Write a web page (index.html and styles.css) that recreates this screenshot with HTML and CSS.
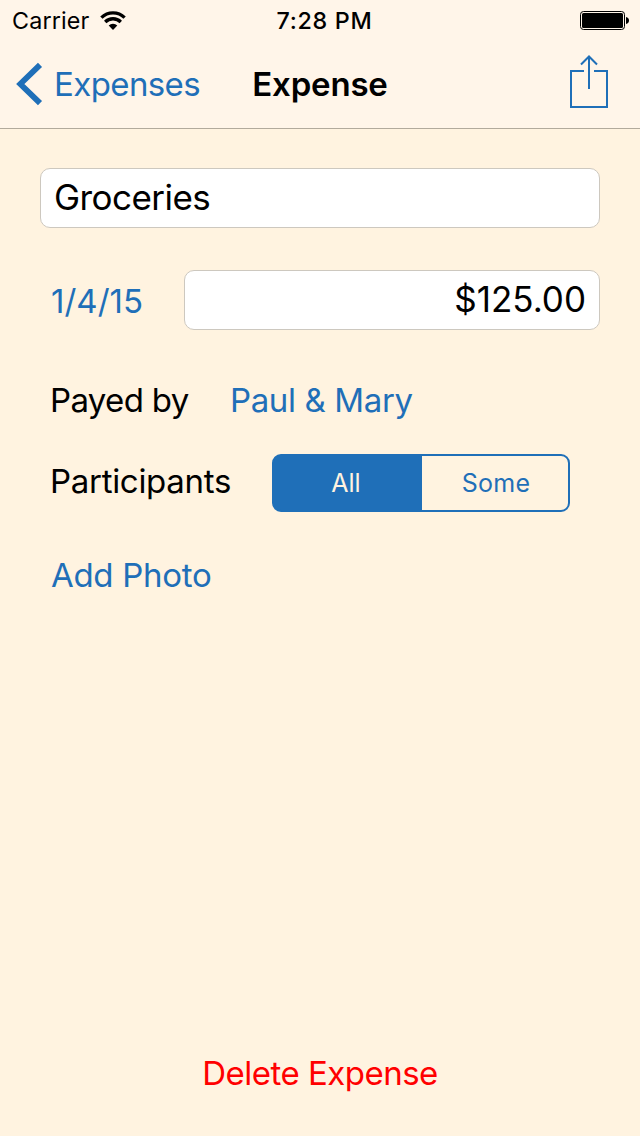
FILE: index.html
```html
<!DOCTYPE html>
<html lang="en">
<head>
<meta charset="utf-8">
<title>Expense</title>
<link rel="stylesheet" href="styles.css">
</head>
<body>
<div class="screen">
  <header class="top">
    <div class="status">
      <div class="carrier"><span class="carrier-name">Carrier</span>
        <svg class="wifi" width="26" height="20" viewBox="0 0 26 20" fill="none" stroke="#000">
          <path d="M1.4 6.7a16.3 16.3 0 0 1 23.2 0" stroke-width="3.300"/>
          <path d="M5.2 11a11 11 0 0 1 15.600 0" stroke-width="3.300"/>
          <path d="M13 19L8.700 14.600a6 6 0 0 1 8.600 0z" fill="#000" stroke="none"/>
        </svg>
      </div>
      <div class="time">7:28 PM</div>
      <svg class="battery" width="50" height="20" viewBox="0 0 50 20">
        <rect x=".5" y=".5" width="44" height="18" rx="3" fill="none" stroke="#000"/>
        <rect x="2" y="2" width="41" height="15" rx="1.500"/>
        <path d="M46 6c4 .5 4 6.500 0 7z"/>
      </svg>
    </div>
    <nav class="nav">
      <a class="back"><svg class="chevron" width="27" height="44" viewBox="0 0 27 44"><path d="M24 2.800L4.300 22 24 41.200" fill="none" stroke="#1f6fb8" stroke-width="5.800"/></svg><span class="back-label">Expenses</span></a>
      <h1 class="title">Expense</h1>
      <svg class="share" width="38" height="54" viewBox="0 0 38 54" fill="none" stroke="#1f6fb8" stroke-width="2"><path d="M14 17H1v36h36V17H24M19 35V3M11 10.500l8-8 8 8"/></svg>
    </nav>
  </header>
  <main class="form">
    <div class="field name">Groceries</div>
    <div class="row amount-row"><a class="link date">1/4/15</a><div class="field amount">$125.00</div></div>
    <div class="row payer-row"><span class="label payed">Payed by</span><a class="link payer">Paul &amp; Mary</a></div>
    <div class="row people-row"><span class="label people">Participants</span>
      <div class="segments"><div class="segment selected">All</div><div class="segment some">Some</div></div>
    </div>
    <a class="link photo">Add Photo</a>
  </main>
  <footer class="footer"><a class="delete">Delete Expense</a></footer>
</div>
</body>
</html>
```
FILE: styles.css
```css
* { box-sizing: border-box; }
body { margin: 0; font-family: Inter, "Liberation Sans", sans-serif; font-size: 33px; line-height: 40px; color: #000; }
.screen { width: 640px; height: 1136px; display: flex; flex-direction: column; background: #fff3e0; white-space: nowrap; }
.top { height: 129px; background: #fff5e9; border-bottom: 1px solid #b2aa9c; }
.status { height: 42px; display: grid; grid-template-columns: 1fr auto 1fr; align-items: center; padding: 0 10px 0 12px; font-size: 23.3px; }
.carrier { display: flex; align-items: center; gap: 10.5px; letter-spacing: .15px; }
.wifi { margin-bottom: 1px; }
.time { font-weight: 500; letter-spacing: .7px; padding-left: 7px; }
.battery { justify-self: end; }
.nav { height: 84px; display: grid; grid-template-columns: 1fr auto 1fr; align-items: center; padding: 0 32px 0 16px; }
.back { display: flex; align-items: center; gap: 11px; color: #1f6fb8; letter-spacing: -.6px; }
.title { margin: 0; padding-left: 16px; font-size: 33px; font-weight: 600; letter-spacing: -.2px; }
.share { justify-self: end; margin-bottom: 6px; }
.form { flex: 1; padding: 39px 40px 0; }
.field { height: 60px; border: 1px solid #cdc8bf; border-radius: 10px; background: #fff; font-size: 35px; line-height: 57px; padding: 0 13px; }
.name { letter-spacing: -.55px; }
.row { display: flex; align-items: center; }
.link { color: #1f6fb8; }
.amount-row { margin-top: 42px; padding-left: 11px; }
.date { width: 133px; padding-top: 2px; }
.amount { flex: 1; text-align: right; }
.payer-row { margin-top: 50px; padding-left: 10px; }
.payed { width: 180px; letter-spacing: -.65px; }
.payer { letter-spacing: -.37px; }
.people-row { margin-top: 34px; height: 58px; padding-left: 10px; }
.people { width: 222px; padding-bottom: 4px; letter-spacing: -.3px; }
.segments { width: 298px; height: 58px; display: flex; border: 2px solid #1f6fb8; border-radius: 9px; background: linear-gradient(90deg, #1f6fb8 148px, transparent 148px) border-box; background-origin: padding-box; background-repeat: no-repeat; font-size: 25px; line-height: 54px; text-align: center; color: #1f6fb8; }
.segment { flex: 1; }
.selected { flex: 0 0 148px; padding-right: 4px; color: #fff3e0; }
.some { padding-left: 2px; letter-spacing: .3px; }
.photo { display: block; margin: 43px 0 0 11px; letter-spacing: -.3px; }
.footer { height: 83px; text-align: center; color: #f00; letter-spacing: -.5px; }
```
